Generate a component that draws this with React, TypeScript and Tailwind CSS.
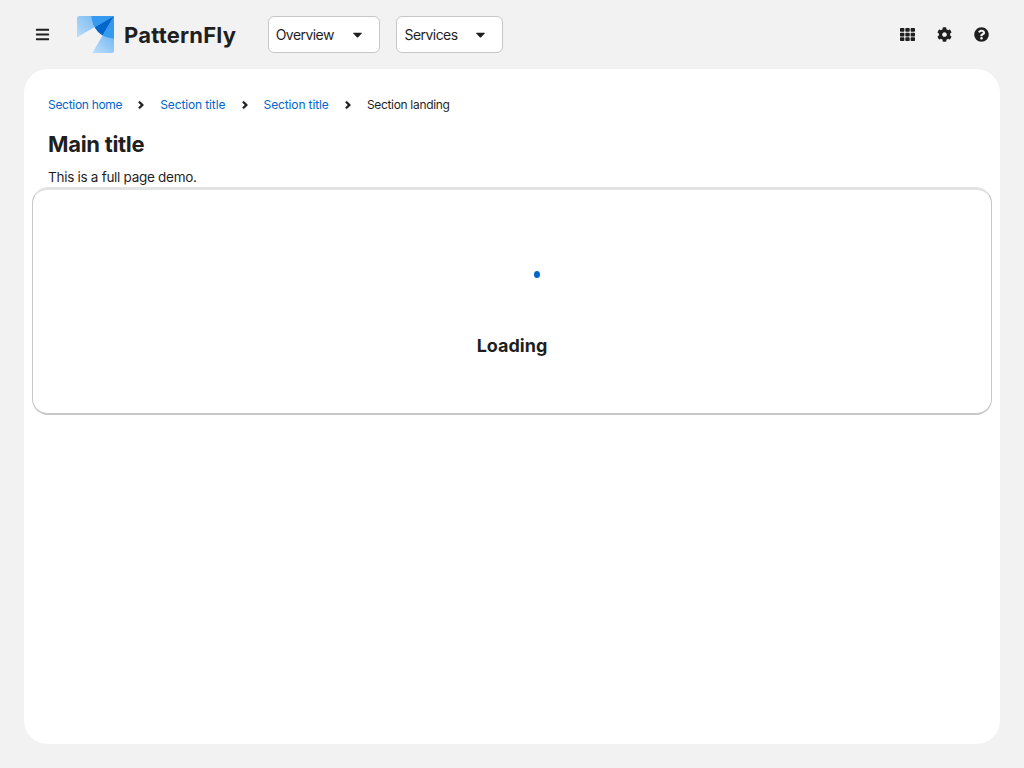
import { FaBars, FaCaretDown, FaTh, FaCog, FaQuestionCircle, FaAngleRight } from "react-icons/fa";

function Logo() {
  return (
    <svg width="37" height="37" viewBox="0 0 37 37" className="shrink-0">
      <defs>
        <linearGradient id="left" x1="0" y1="20" x2="22" y2="0" gradientUnits="userSpaceOnUse">
          <stop stopColor="#b9dcfa" />
          <stop offset="1" stopColor="#70b6f2" />
        </linearGradient>
        <linearGradient id="right" x1="18" y1="37" x2="37" y2="18" gradientUnits="userSpaceOnUse">
          <stop stopColor="#b9dcfa" />
          <stop offset="1" stopColor="#70b6f2" />
        </linearGradient>
        <clipPath id="disc"><circle cx="37" cy="0" r="22.5" /></clipPath>
      </defs>
      <path d="M2.5 0H37L0 21.2V2.5Q0 0 2.5 0Z" fill="url(#left)" />
      <path d="M37 0V34.5Q37 37 34.5 37H15.3Z" fill="url(#right)" />
      <g clipPath="url(#disc)">
        <path d="M0 0H37L0 21.2Z" fill="#369bf0" />
        <path d="M37 0V37H15.3Z" fill="#369bf0" />
        <path d="M37 0L0 21.2V37H15.3Z" fill="#0066cc" />
      </g>
    </svg>
  );
}

function Toggle({ label, className }: { label: string; className: string }) {
  return (
    <button className={`flex h-[37px] items-center justify-between rounded-[6px] border border-[#c7c7c7] bg-white pl-[7px] pr-[14px] text-[14px] tracking-[-0.55px] ${className}`}>
      <span>{label}</span>
      <FaCaretDown className="h-[15px] w-[15px]" />
    </button>
  );
}

function Separator() {
  return <FaAngleRight size={12} strokeWidth={20} stroke="currentColor" className="mx-[13px] shrink-0" />;
}

export default function App() {
  return (
    <div className="flex h-screen flex-col overflow-hidden bg-[#f2f2f2] font-['Inter',sans-serif] text-[#1f1f1f]">
      <header className="flex h-[69px] shrink-0 items-center pl-[35px] pr-[35px]">
        <FaBars size={15} className="shrink-0" />
        <div className="ml-[27px] flex items-center">
          <Logo />
          <span className="ml-[10px] w-[143.7px] text-[22px] font-bold leading-none tracking-[0.2px]">PatternFly</span>
        </div>
        <Toggle label="Overview" className="w-[112.8px]" />
        <Toggle label="Services" className="ml-[16px] w-[107px]" />
        <div className="ml-auto flex items-center gap-[22px]">
          <FaTh size={15} />
          <FaCog size={15} />
          <FaQuestionCircle size={15} />
        </div>
      </header>
      <main className="mx-[24px] flex h-[675px] flex-col rounded-[24px] bg-white px-[8px] pt-[26px]">
        <nav className="flex h-[20px] items-center px-[16px] text-[12px]">
          <a className="w-[74.3px] whitespace-nowrap tracking-[-0.3px] text-[#0066cc]">Section home</a>
          <Separator />
          <a className="w-[65.3px] whitespace-nowrap tracking-[-0.13px] text-[#0066cc]">Section title</a>
          <Separator />
          <a className="w-[65.3px] whitespace-nowrap tracking-[-0.13px] text-[#0066cc]">Section title</a>
          <Separator />
          <span className="whitespace-nowrap tracking-[-0.32px]">Section landing</span>
        </nav>
        <h1 className="mt-[15px] px-[16px] text-[22px] font-bold leading-[28px] tracking-[-0.3px]">Main title</h1>
        <p className="mt-[10px] px-[16px] text-[13.5px] leading-[19px] tracking-[-0.28px]">This is a full page demo.</p>
        <section className="flex h-[228px] flex-col items-center rounded-[16px] border border-b-2 border-t-[3px] border-[#c7c7c7] border-t-[#e3e3e3] pt-[57px]">
          <svg width="54" height="54" viewBox="0 0 54 54" className="overflow-visible">
            <ellipse cx="52" cy="27.5" rx="3" ry="3.6" fill="#0066cc" />
          </svg>
          <h2 className="mt-[33px] text-[18px] font-bold leading-[24px]">Loading</h2>
        </section>
      </main>
    </div>
  );
}
